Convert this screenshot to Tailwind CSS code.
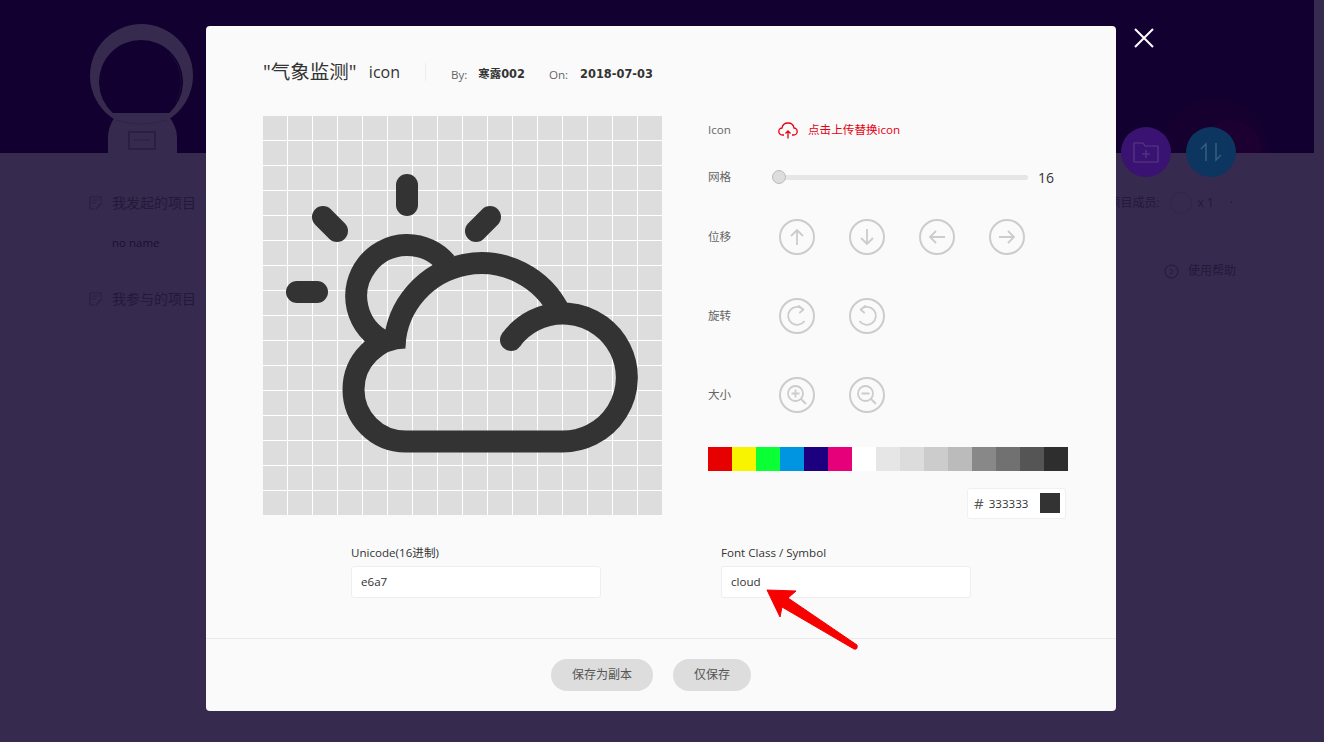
<!DOCTYPE html>
<html lang="zh">
<head>
<meta charset="utf-8">
<title>气象监测 icon</title>
<script src="https://cdn.jsdelivr.net/npm/@tailwindcss/browser@4"></script>
</head>
<body class="m-0 overflow-hidden">
<div class="relative h-[742px] w-[1324px] overflow-hidden bg-[#372a4f] font-['Open_Sans','Noto_Sans_CJK_SC',sans-serif]">

  <!-- dimmed page behind the dialog -->
  <header class="relative h-[153px] w-[1314px] bg-[#120030]">
    <svg class="absolute left-[85px] top-[20px]" width="115" height="133" viewBox="85 20 115 133">
      <path d="M108 153 V138 C108 128 112 120 118 113 H166 C172 120 177 128 177 138 V153 Z" fill="#372a4f"/>
      <circle cx="141.500" cy="75.500" r="51.500" fill="#372a4f"/>
      <path d="M112.700 113 A42 42 0 1 1 169.300 113 Z" fill="#120030"/>
      <path d="M176 102 A41 41 0 0 0 170 54" fill="none" stroke="#1d0c38" stroke-width="1"/>
      <path d="M116 120 Q141 128 167 120" fill="none" stroke="#30244a" stroke-width="1"/>
      <rect x="129" y="132" width="26" height="17" fill="none" stroke="#2b1f44" stroke-width="2"/>
      <path d="M134 140 H150" stroke="#2b1f44" stroke-width="1"/>
    </svg>
    <svg class="absolute left-[1160px] top-[95px]" width="110" height="58" viewBox="1160 95 110 58">
      <circle cx="1215" cy="152" r="54" fill="#150030"/>
      <circle cx="1230" cy="152" r="32" fill="#1b0031"/>
    </svg>
    <div class="absolute left-[1121px] top-[127px] flex h-[50px] w-[50px] items-center justify-center rounded-full bg-[#3a1272]">
      <svg width="26" height="22" viewBox="0 0 26 22" fill="none" stroke="#553a85" stroke-width="1.200">
        <path d="M1 2 H10 L12 5 H25 V21 H1 Z"/><path d="M13 9 V17 M9 13 H17"/>
      </svg>
    </div>
    <div class="absolute left-[1186px] top-[127px] flex h-[50px] w-[50px] items-center justify-center rounded-full bg-[#0c3560]">
      <svg width="26" height="22" viewBox="0 0 26 22" fill="none" stroke="#33607f" stroke-width="1.500">
        <path d="M8 20 V3 L3 8"/><path d="M18 2 V19 L23 14"/>
      </svg>
    </div>
  </header>

  <main class="flex h-[589px] w-full justify-between pl-[88px] pr-[88px] pt-[41px] text-[#241938]">
    <aside class="flex w-[200px] flex-col">
      <div class="flex h-[17px] items-center gap-2 text-[14px] leading-none">
        <svg width="16" height="16" viewBox="0 0 16 16" fill="none" stroke="#2a1f42" stroke-width="1.200"><path d="M13 6 V2 H2 V14 H7 M4.500 5 H10 M4.500 8 H8 M8 14 L14 7.500"/></svg>
        <span>我发起的项目</span>
      </div>
      <div class="mt-[24px] pl-[24px] text-[11.5px] leading-[16px] text-[#1b1030]">no name</div>
      <div class="mt-[39px] flex h-[17px] items-center gap-2 text-[14px] leading-none">
        <svg width="16" height="16" viewBox="0 0 16 16" fill="none" stroke="#2a1f42" stroke-width="1.200"><path d="M13 6 V2 H2 V14 H7 M4.500 5 H10 M4.500 8 H8 M8 14 L14 7.500"/></svg>
        <span>我参与的项目</span>
      </div>
    </aside>
    <div class="flex w-[150px] flex-col items-end text-[12px]">
      <div class="mr-[3px] flex h-[17px] items-center">
        <span>项目成员:</span>
        <span class="ml-[10px] h-[22px] w-[22px] rounded-full border border-[#30254a]"></span>
        <span class="ml-[6px]">x 1</span>
        <span class="ml-[16px]">·</span>
      </div>
      <div class="mt-[51px] flex items-center gap-[9px]">
        <svg width="15" height="15" viewBox="0 0 15 15" fill="none" stroke="#241938" stroke-width="1"><circle cx="7.500" cy="7.500" r="6.500"/><path d="M6 5 L9 7.500 L6 10"/></svg>
        <span>使用帮助</span>
      </div>
    </div>
  </main>

  <!-- close button -->
  <button class="absolute left-[1133px] top-[27px] flex h-[22px] w-[22px] items-center justify-center" aria-label="关闭">
    <svg width="22" height="22" viewBox="0 0 22 22" fill="none" stroke="#fff" stroke-width="2"><path d="M2 2 L20 20 M20 2 L2 20"/></svg>
  </button>

  <!-- dialog -->
  <section class="absolute left-[206px] top-[26px] flex h-[685px] w-[910px] flex-col rounded-[4px] bg-[#fafafa]">
    <div class="flex h-[90px] items-start pl-[57px] pt-[32px]">
      <h1 class="flex h-[28px] w-[137px] items-center justify-between text-[19.5px] font-normal leading-[28px] text-[#333]"><span>"气象监测"</span><span class="text-[16px]">icon</span></h1>
      <span class="ml-[25px] mt-[5px] h-[18px] w-px bg-[#eee]"></span>
      <div class="ml-[25px] flex h-[33px] items-center text-[11.6px] text-[#666]">
        <span>By:</span>
        <span class="ml-[11px] font-['DejaVu_Sans','Noto_Sans_CJK_SC',sans-serif] text-[11.4px] font-bold text-[#333]">寒露002</span>
        <span class="ml-[24px]">On:</span>
        <span class="ml-[12px] font-['DejaVu_Sans',sans-serif] text-[11.4px] font-bold text-[#333]">2018-07-03</span>
      </div>
    </div>

    <div class="flex h-[399px] items-start pl-[57px]">
      <div class="h-[399px] w-[399px] shrink-0 bg-[#ddd] bg-[linear-gradient(to_right,transparent_24px,#fff_24px),linear-gradient(to_bottom,transparent_24px,#fff_24px)] bg-[size:25px_25px]">
        <svg class="block" width="399" height="399" viewBox="263 116 399 399" fill="none" stroke="#333" stroke-width="22">
          <g stroke-linecap="round">
            <path d="M407 185 V205"/>
            <path d="M323 217 L337 231"/>
            <path d="M490 217 L476 231"/>
            <path d="M297 292 H317"/>
          </g>
          <path d="M385 342 A51 51 0 1 1 446 263"/>
          <path d="M394.500 345 A87 87 0 0 1 560 313"/>
          <path d="M511 340 A64 64 0 1 1 562 441.500 H405.500 A52 52 0 0 1 405.500 337.500"/>
          <circle cx="511" cy="340" r="11" fill="#333" stroke="none"/>
        </svg>
      </div>

      <div class="ml-[46px] flex h-[403px] w-[360px] shrink-0 flex-col text-[11.6px] text-[#666]">
        <div class="flex h-[28px] items-center">
          <span class="w-[70px]">Icon</span>
          <svg width="20" height="17" viewBox="0 0 20 17" fill="none" stroke="#e60012" stroke-width="1.300">
            <path d="M6 13 H4.500 C2 13 .8 11 .8 9.500 C.8 7.500 2.500 6 4 6 C4.500 3 7 1 10 1 C13 1 15.500 3 16 6 C17.500 6 19.200 7.500 19.200 9.500 C19.200 11 18 13 15.500 13 H14"/>
            <path d="M10 16.500 V9 M7.500 11.500 L10 9 L12.500 11.500"/>
          </svg>
          <span class="ml-[10px] text-[#e60012]">点击上传替换icon</span>
        </div>
        <div class="mt-[19px] flex h-[28px] items-center">
          <span class="w-[64px]">网格</span>
          <div class="relative h-[5px] w-[256px] rounded-full bg-[#e6e6e6]">
            <span class="absolute left-0 top-[-5px] h-[14px] w-[14px] rounded-full border border-[#bbb] bg-[#ddd]"></span>
          </div>
          <span class="ml-[10px] text-[14px] text-[#333]">16</span>
        </div>
        <div class="mt-[28px] flex h-[36px] items-center">
          <span class="w-[71px]">位移</span>
          <div class="flex gap-[34px]">
            <svg width="36" height="36" viewBox="0 0 36 36" fill="none" stroke="#ccc"><circle cx="18" cy="18" r="17" stroke-width="2"/><path stroke-width="1.800" d="M18 26 V11 M12 17 L18 11 L24 17"/></svg>
            <svg width="36" height="36" viewBox="0 0 36 36" fill="none" stroke="#ccc"><circle cx="18" cy="18" r="17" stroke-width="2"/><path stroke-width="1.800" d="M18 10 V25 M12 19 L18 25 L24 19"/></svg>
            <svg width="36" height="36" viewBox="0 0 36 36" fill="none" stroke="#ccc"><circle cx="18" cy="18" r="17" stroke-width="2"/><path stroke-width="1.800" d="M26 18 H11 M17 12 L11 18 L17 24"/></svg>
            <svg width="36" height="36" viewBox="0 0 36 36" fill="none" stroke="#ccc"><circle cx="18" cy="18" r="17" stroke-width="2"/><path stroke-width="1.800" d="M10 18 H25 M19 12 L25 18 L19 24"/></svg>
          </div>
        </div>
        <div class="mt-[43px] flex h-[36px] items-center">
          <span class="w-[71px]">旋转</span>
          <div class="flex gap-[34px]">
            <svg width="36" height="36" viewBox="0 0 36 36" fill="none" stroke="#ccc"><circle cx="18" cy="18" r="17" stroke-width="2"/><path stroke-width="1.800" d="M25.500 23 A9 9 0 1 1 24 11 M19.300 7.500 L24.300 11.700 L20.300 15"/></svg>
            <svg width="36" height="36" viewBox="0 0 36 36" fill="none" stroke="#ccc"><circle cx="18" cy="18" r="17" stroke-width="2"/><path stroke-width="1.800" d="M10.500 23 A9 9 0 1 0 12 11 M16.700 7.500 L11.700 11.700 L15.700 15"/></svg>
          </div>
        </div>
        <div class="mt-[43px] flex h-[36px] items-center">
          <span class="w-[71px]">大小</span>
          <div class="flex gap-[34px]">
            <svg width="36" height="36" viewBox="0 0 36 36" fill="none" stroke="#ccc"><circle cx="18" cy="18" r="17" stroke-width="2"/><g stroke-width="1.800"><circle cx="16.500" cy="16.500" r="7.500"/><path d="M22 22 L27 27 M16.500 12.500 V20.500 M12.500 16.500 H20.500"/></g></svg>
            <svg width="36" height="36" viewBox="0 0 36 36" fill="none" stroke="#ccc"><circle cx="18" cy="18" r="17" stroke-width="2"/><g stroke-width="1.800"><circle cx="16.500" cy="16.500" r="7.500"/><path d="M22 22 L27 27 M12.500 16.500 H20.500"/></g></svg>
          </div>
        </div>
        <div class="mt-[34px] flex h-[24px] w-[360px]">
          <span class="w-[24px] bg-[#e60000]"></span>
          <span class="w-[24px] bg-[#f8f400]"></span>
          <span class="w-[24px] bg-[#0aff34]"></span>
          <span class="w-[24px] bg-[#0095e0]"></span>
          <span class="w-[24px] bg-[#1d0080]"></span>
          <span class="w-[24px] bg-[#e6007a]"></span>
          <span class="w-[24px] bg-white"></span>
          <span class="w-[24px] bg-[#e6e6e6]"></span>
          <span class="w-[24px] bg-[#dcdcdc]"></span>
          <span class="w-[24px] bg-[#ccc]"></span>
          <span class="w-[24px] bg-[#bbb]"></span>
          <span class="w-[24px] bg-[#888]"></span>
          <span class="w-[24px] bg-[#717171]"></span>
          <span class="w-[24px] bg-[#555]"></span>
          <span class="w-[24px] bg-[#2e2e2e]"></span>
        </div>
        <div class="mt-[17px] mr-[2px] flex h-[31px] w-[99px] shrink-0 items-center self-end rounded-[3px] border border-[#f0f0f0] bg-white pl-[6px] pr-[5px] text-[#333]">
          <span class="text-[15px] text-[#555]">#</span>
          <span class="ml-[5px]">333333</span>
          <span class="ml-auto mb-[2px] h-[20px] w-[20px] bg-[#333]"></span>
        </div>
      </div>
    </div>

    <div class="mt-[30px] flex gap-[120px] pl-[145px] text-[11.6px] text-[#333]">
      <label class="block w-[250px]">
        <span class="block h-[21px] leading-[15px]">Unicode(16进制)</span>
        <span class="flex h-[32px] items-center rounded-[3px] border border-[#eee] bg-white pl-[9px]">e6a7</span>
      </label>
      <label class="block w-[250px]">
        <span class="block h-[21px] leading-[15px]">Font Class / Symbol</span>
        <span class="flex h-[32px] items-center rounded-[3px] border border-[#eee] bg-white pl-[9px]">cloud</span>
      </label>
    </div>

    <footer class="mt-[40px] flex justify-center gap-[20px] border-t border-[#eaeaea] pr-[20px] pt-[20px] text-[12px] text-[#555]">
      <button class="h-[32px] w-[102px] rounded-full bg-[#ddd]">保存为副本</button>
      <button class="h-[32px] w-[78px] rounded-full bg-[#ddd]">仅保存</button>
    </footer>
  </section>

  <!-- annotation arrow -->
  <svg class="absolute left-[760px] top-[585px]" width="105" height="70" viewBox="760 585 105 70">
    <path d="M767 590 L796 591 L788 598 L857 645 Q858 650 854 649 L782 607 L780 617 Z" fill="#f60000" stroke="#f60000" stroke-linejoin="round"/>
  </svg>
</div>
</body>
</html>
